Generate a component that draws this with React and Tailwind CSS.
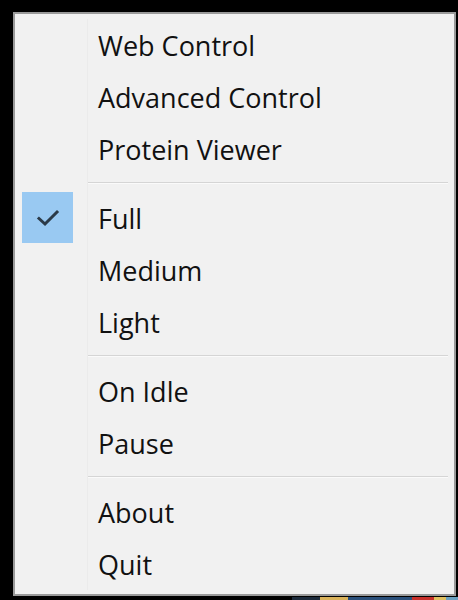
import React from "react";

const groups = [
  ["Web Control", "Advanced Control", "Protein Viewer"],
  ["Full", "Medium", "Light"],
  ["On Idle", "Pause"],
  ["About", "Quit"],
];

function CheckBox() {
  return (
    <div className="ml-[7px] w-[51px] h-[51px] bg-[#99c9f2] flex items-center justify-center">
      <svg width="24" height="18" viewBox="0 0 24 18">
        <path
          d="M3 9.5 L9 15 L21 3"
          fill="none"
          stroke="#2b3a48"
          strokeWidth="3"
          strokeLinecap="square"
        />
      </svg>
    </div>
  );
}

function Item({ label, checked }) {
  return (
    <div className="flex h-[52px]">
      <div className="w-[73px] shrink-0 border-r border-[#ebebeb]">
        {checked && <CheckBox />}
      </div>
      <div className="flex-1 flex items-center pl-[10px] text-[27px] text-[#111] leading-none">
        {label}
      </div>
    </div>
  );
}

function Separator() {
  return (
    <div className="flex h-[17px]">
      <div className="w-[73px] shrink-0 border-r border-[#ebebeb]" />
      <div className="flex-1 pt-[7px] pr-[6px]">
        <div className="h-[2px] bg-[#d5d5d5] border-b border-[#fafafa]" />
      </div>
    </div>
  );
}

export default function App() {
  return (
    <div
      className="w-[458px] h-[600px] bg-black overflow-hidden pl-[13px] pt-[12px]"
      style={{ fontFamily: '"Open Sans", "Noto Sans", sans-serif' }}
    >
      <div className="w-[443px] border-2 border-[#9a9a9a] bg-[#f1f1f1] pt-[5px] pb-[4px]">
        {groups.map((group, gi) => (
          <div key={gi}>
            {gi > 0 && <Separator />}
            {group.map((label) => (
              <Item key={label} label={label} checked={label === "Full"} />
            ))}
          </div>
        ))}
      </div>
      {/* taskbar peeking out below */}
      <div className="flex h-[4px] mt-[1px] -ml-[13px]">
        <div className="w-[292px] bg-black" />
        <div className="w-[28px] bg-[#1c2a3a]" />
        <div className="w-[28px] bg-[#d9b25a]" />
        <div className="w-[64px] bg-[#2a4f7a]" />
        <div className="w-[22px] bg-[#c8302a]" />
        <div className="w-[12px] bg-[#e0c060]" />
        <div className="flex-1 bg-[#6aa0c0]" />
      </div>
    </div>
  );
}
